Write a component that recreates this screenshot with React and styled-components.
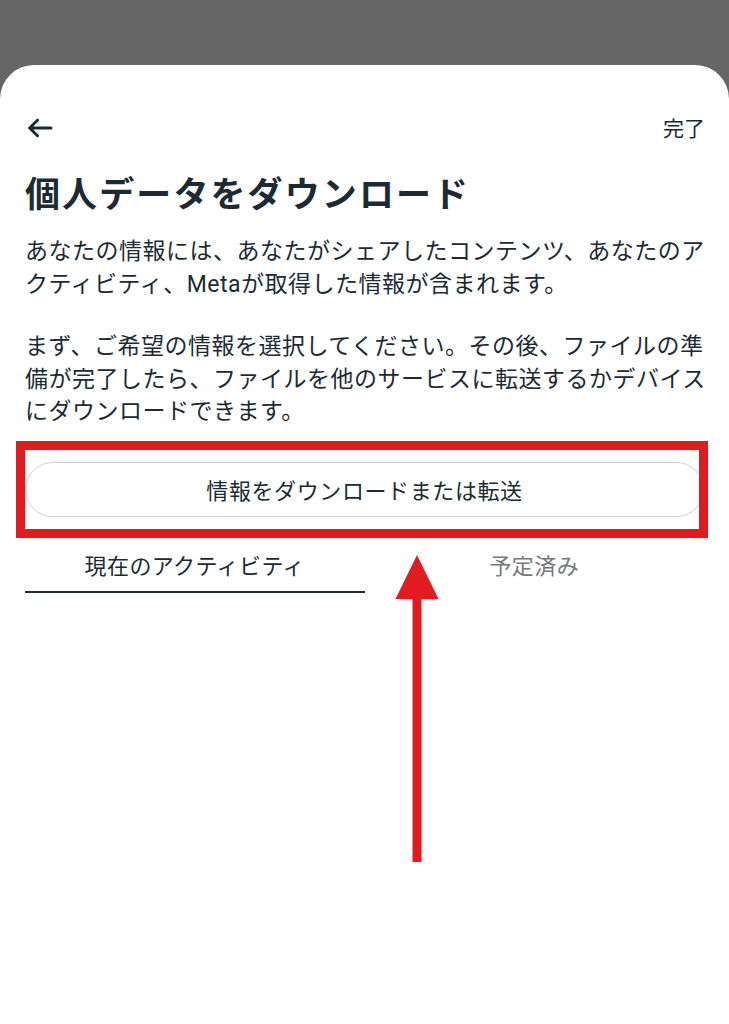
import React from 'react';
import styled, { createGlobalStyle } from 'styled-components';

const GlobalStyle = createGlobalStyle`
  html, body {
    margin: 0;
    padding: 0;
    background: #666666;
  }
  * { box-sizing: border-box; }
`;

const Page = styled.div`
  position: relative;
  width: 729px;
  min-height: 1024px;
  padding-top: 65px;
  background: #666666;
  font-family: Roboto, "Noto Sans CJK JP", sans-serif;
  color: #1c2b33;
`;

const Sheet = styled.div`
  min-height: 959px;
  background: #ffffff;
  border-radius: 34px 34px 0 0;
  padding: 43px 25px 0 25px;
`;

const TopBar = styled.div`
  height: 40px;
  display: flex;
  align-items: center;
  justify-content: space-between;
`;

const BackButton = styled.button`
  border: none;
  background: none;
  padding: 0 0 0 2px;
  display: flex;
  align-items: center;
  color: #1c2b33;
`;

const DoneLink = styled.span`
  font-size: 21px;
  font-weight: 400;
  margin-right: -1px;
  margin-top: -3px;
`;

const Title = styled.h1`
  margin: 26px 0 0;
  font-size: 35px;
  line-height: 44px;
  font-weight: 700;
  letter-spacing: 2.1px;
  white-space: nowrap;
`;

const Paragraph = styled.p`
  margin: ${(p) => p.$gap}px 0 0;
  font-size: 23px;
  line-height: 32.5px;
  letter-spacing: 0.5px;
  white-space: nowrap;
`;

const ActionButton = styled.button`
  display: block;
  width: 100%;
  height: 55px;
  margin-top: 33px;
  border: 1.5px solid #cdd1d5;
  border-radius: 28px;
  background: #ffffff;
  font-family: inherit;
  font-size: 22px;
  font-weight: 400;
  color: #1c2b33;
  letter-spacing: 0.6px;
`;

const Tabs = styled.div`
  display: grid;
  grid-template-columns: 1fr 1fr;
  margin-top: 35px;
`;

const Tab = styled.div`
  text-align: center;
  font-size: 22px;
  line-height: 30px;
  font-weight: 400;
  letter-spacing: 0.4px;
  padding-bottom: 9px;
  color: ${(p) => (p.$active ? '#1c2b33' : '#75797d')};
  border-bottom: 2px solid ${(p) => (p.$active ? '#1c2b33' : 'transparent')};
`;

const Highlight = styled.div`
  position: absolute;
  left: 16px;
  top: 441px;
  width: 692px;
  height: 97px;
  border: 9px solid #e31b1e;
  pointer-events: none;
`;

const Pointer = styled.svg`
  position: absolute;
  left: 390px;
  top: 550px;
`;

const BackArrow = () => (
  <svg width="26" height="20" viewBox="0 0 26 20" fill="none">
    <path
      d="M24 10H3M10.5 2.2L2.6 10l7.9 7.8"
      stroke="currentColor"
      strokeWidth="3"
      strokeLinecap="round"
      strokeLinejoin="round"
    />
  </svg>
);

const App = () => (
  <Page>
    <GlobalStyle />
    <Sheet>
      <TopBar>
        <BackButton aria-label="戻る">
          <BackArrow />
        </BackButton>
        <DoneLink>完了</DoneLink>
      </TopBar>
      <Title>個人データをダウンロード</Title>
      <Paragraph $gap={18}>
        あなたの情報には、あなたがシェアしたコンテンツ、あなたのア
        <br />
        クティビティ、Metaが取得した情報が含まれます。
      </Paragraph>
      <Paragraph $gap={30}>
        まず、ご希望の情報を選択してください。その後、ファイルの準
        <br />
        備が完了したら、ファイルを他のサービスに転送するかデバイス
        <br />
        にダウンロードできます。
      </Paragraph>
      <ActionButton>情報をダウンロードまたは転送</ActionButton>
      <Tabs>
        <Tab $active>現在のアクティビティ</Tab>
        <Tab>予定済み</Tab>
      </Tabs>
    </Sheet>

    {/* annotation overlay */}
    <Highlight />
    <Pointer width="54" height="316" viewBox="0 0 54 316">
      <path d="M27 5L48.5 49H31.5V312H22.5V49H5.5Z" fill="#e31b1e" />
    </Pointer>
  </Page>
);

export default App;
